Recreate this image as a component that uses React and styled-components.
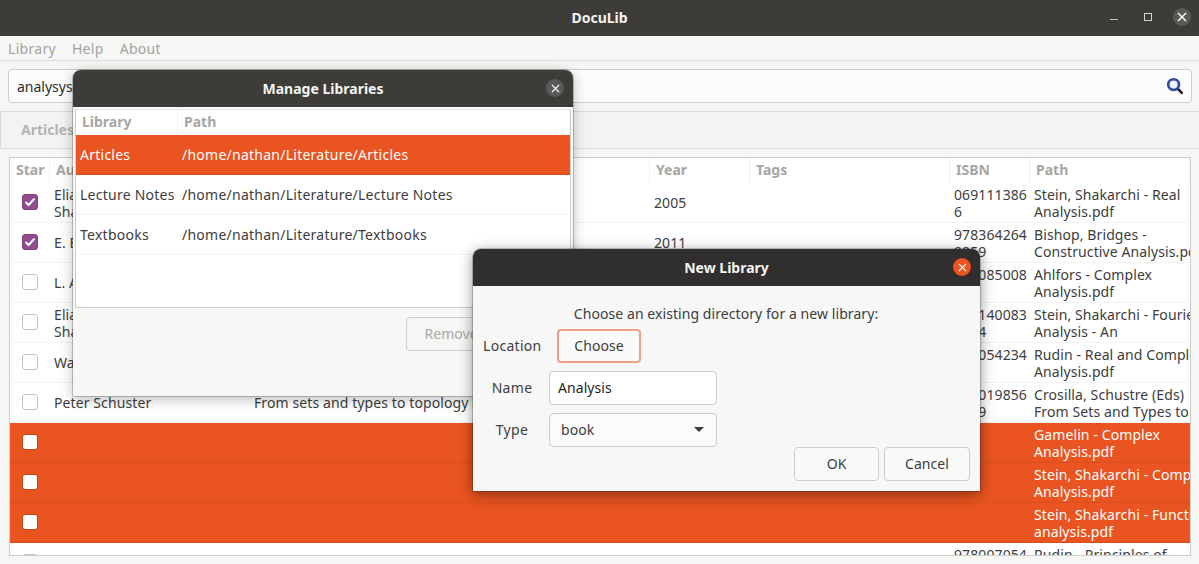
import React from "react";
import styled, { createGlobalStyle } from "styled-components";

const Global = createGlobalStyle`
  html, body { margin: 0; padding: 0; background: #f6f6f5; }
  * { box-sizing: border-box; }
`;

const Win = styled.div`
  position: relative; width: 1199px; height: 564px; overflow: hidden;
  background: #f6f6f5; color: #3d3d3d;
  font-family: "Noto Sans", sans-serif; font-size: 14px; line-height: 17px;
  display: flex; flex-direction: column;
`;
const TitleBar = styled.div`
  height: ${p => p.$h || 36}px; flex: none; background: ${p => p.$bg || "#3d3c39"};
  display: flex; align-items: center; justify-content: center; position: relative;
  color: #f4f4f2; font-weight: 700; font-size: 14px; padding-bottom: 1px;
`;
const WinButtons = styled.div`
  position: absolute; right: 8px; top: 8px; display: flex; align-items: center; gap: 16px;
`;
const WinBtn = styled.div`
  width: 18px; height: 18px; display: flex; align-items: center; justify-content: center;
  border-radius: 50%; background: ${p => p.$bg || "transparent"};
`;
const MenuBar = styled.div`
  height: 25px; flex: none; display: flex; gap: 16px; padding: 4px 8px 0;
  color: #a3a3a1; border-bottom: 1px solid #dcdcda; letter-spacing: .3px;
`;
const SearchRow = styled.div`
  height: 51px; flex: none; padding: 8px 7px 8px 8px; border-bottom: 1px solid #d9d9d7;
`;
const SearchBox = styled.div`
  height: 34px; background: #fcfcfc; border: 1px solid #cfcfcd; border-radius: 4px;
  display: flex; align-items: center; justify-content: space-between; padding: 0 7px 0 8px; color: #2d2d2d;
`;
const TabsRow = styled.div`
  height: 37px; flex: none; display: flex; align-items: center; padding: 0 0 1px 20px;
  background: #f3f3f2; border-bottom: 1px solid #d9d9d7; border-left: 1px solid #d9d9d7;
  color: #b5b5b3; font-weight: 700;
`;
const Content = styled.div`
  flex: 1; padding: 8px 8px 8px 9px; min-height: 0;
`;
const TableFrame = styled.div`
  height: 100%; background: #fff; border: 1px solid #cdcdcb; overflow: hidden;
`;
const grid = "40px 200px 400px 100px 200px 80px 160px";
const HeadRow = styled.div`
  display: grid; grid-template-columns: ${p => p.$cols}; height: ${p => p.$h}px; background: #fff;
`;
const HeadCell = styled.div`
  padding: 3px 0 0 6px; color: #a6a6a4; font-weight: 700; white-space: nowrap; overflow: hidden;
  border-right: 1px solid #f1f1f0;
`;
const Row = styled.div`
  display: grid; grid-template-columns: ${p => p.$cols}; height: 40px;
  background: ${p => (p.$sel ? "#e95420" : "#fff")}; color: ${p => (p.$sel ? "#fff" : "#3d3d3d")};
  border-bottom: 1px solid ${p => (p.$sel ? "#d94e1d" : "#f3f3f2")};
`;
const Cell = styled.div`
  padding: ${p => (p.$n === 2 ? 3 : 11)}px 0 0 4px; white-space: nowrap; overflow: hidden; height: 39px;
  letter-spacing: ${p => p.$ls || 0.1}px;
`;
const StarCell = styled.div`
  display: flex; align-items: center; justify-content: center; padding-bottom: 2px;
`;
const Check = styled.div`
  width: 16px; height: 16px; border-radius: 3px;
  background: ${p => (p.$on ? "#924d8b" : "#fff")};
  border: 1px solid ${p => (p.$on ? "#7f4279" : p.$sel ? "#b8441a" : "#c4c4c2")};
  display: flex; align-items: center; justify-content: center;
`;
const Dialog = styled.div`
  position: absolute; left: ${p => p.$x}px; top: ${p => p.$y}px; width: ${p => p.$w}px; height: ${p => p.$h}px;
  background: #f7f7f7; border-radius: 8px 8px 0 0; display: flex; flex-direction: column;
  box-shadow: 0 3px 14px rgba(0,0,0,${p => p.$shadow}); outline: 1px solid rgba(0,0,0,.2);
`;
const DlgTitle = styled(TitleBar)`
  border-radius: 8px 8px 0 0;
`;
const DlgClose = styled.div`
  position: absolute; right: 9px; top: 9px; width: 18px; height: 18px; border-radius: 50%;
  background: ${p => p.$bg}; display: flex; align-items: center; justify-content: center;
`;
const LibTableWrap = styled.div`
  margin: 2px 2px 0; height: 199px; background: #fff; border: 1px solid #cdcdcb; border-top-color: #e5e5e5;
`;
const RemoveRow = styled.div`
  display: flex; padding: 9px 0 0 333px;
`;
const Btn = styled.div`
  width: ${p => p.$w}px; height: ${p => p.$h || 34}px; border-radius: 4px; background: ${p => p.$bg || "#fafafa"};
  border: ${p => p.$bw || 1}px solid ${p => p.$bc || "#cdcdcb"}; color: ${p => p.$c || "#3d3d3d"};
  display: flex; align-items: center; justify-content: center; flex: none; padding-bottom: 2px;
`;
const DlgBody = styled.div`
  flex: 1; position: relative; padding: 19px 10px 0; display: flex; flex-direction: column; letter-spacing: .07px;
`;
const Prompt = styled.div`
  text-align: center; margin-bottom: 7px; height: 17px; margin-left: -1px;
`;
const FormRow = styled.div`
  display: flex; align-items: center; height: 34px; margin-bottom: 8px;
`;
const Label = styled.div`
  width: ${p => p.$w}px; margin-right: ${p => p.$mr}px; text-align: center; flex: none; letter-spacing: .3px; padding-bottom: 2px;
`;
const Input = styled.div`
  width: 168px; height: 34px; background: #fff; border: 1px solid #cdcdcb; border-radius: 4px;
  display: flex; align-items: center; padding: 0 8px 2px; color: #1f1f1f;
`;
const Select = styled(Input)`
  background: #fbfbfb; color: #3d3d3d; padding: 0 12px 2px 11px; justify-content: space-between;
`;
const Caret = styled.div`
  width: 0; height: 0; border-left: 5px solid transparent; border-right: 5px solid transparent; border-top: 5px solid #3d3d3d;
`;
const Actions = styled.div`
  position: absolute; right: 10px; bottom: 10px; display: flex; gap: 5px;
`;

const X = ({ s = 10, w = 1.4, c = "#fff" }) => (
  <svg width={s} height={s} viewBox="0 0 10 10"><path d="M1 1 9 9M9 1 1 9" stroke={c} strokeWidth={w} fill="none" /></svg>
);
const Tick = () => (
  <svg width="12" height="10" viewBox="0 0 12 10"><path d="M1.5 5 4.5 8 10.5 1.8" stroke="#fff" strokeWidth="2" fill="none" /></svg>
);
const Glass = () => (
  <svg width="18" height="18" viewBox="0 0 18 18">
    <path d="M10.5 10.5 15.8 15.8" stroke="#222" strokeWidth="2.6" strokeLinecap="round" />
    <circle cx="7.6" cy="7.6" r="5.4" fill="#e6eef8" stroke="#2f4a9c" strokeWidth="2.6" />
    <circle cx="7.6" cy="7.6" r="3.2" fill="#f2f5fb" />
  </svg>
);

const rows = [
  { on: 1, a: ["Elias M. Stein, Rami", "Shakarchi"], t: "Real Analysis", y: "2005", i: ["069111386", "6"], p: ["Stein, Shakarchi - Real", "Analysis.pdf"] },
  { on: 1, a: ["E. Bishop, D. Bridges"], t: "Constructive Analysis", y: "2011", i: ["978364264", "9059"], p: ["Bishop, Bridges -", "Constructive Analysis.pdf"] },
  { a: ["L. Ahlfors"], t: "Complex Analysis", i: ["007085008", "9"], p: ["Ahlfors - Complex", "Analysis.pdf"] },
  { a: ["Elias M. Stein, Rami", "Shakarchi"], t: "Fourier Analysis", i: ["978140083", "1384"], p: ["Stein, Shakarchi - Fourier", "Analysis - An"] },
  { a: ["Walter Rudin"], t: "Real and Complex Analysis", i: ["007054234", "1"], p: ["Rudin - Real and Complex", "Analysis.pdf"] },
  { a: ["Peter Schuster"], t: "From sets and types to topology and analysis", i: ["978019856", "0619"], p: ["Crosilla, Schustre (Eds)", "From Sets and Types to"] },
  { sel: 1, p: ["Gamelin - Complex", "Analysis.pdf"] },
  { sel: 1, p: ["Stein, Shakarchi - Complex", "Analysis.pdf"] },
  { sel: 1, p: ["Stein, Shakarchi - Functional", "analysis.pdf"] },
  { i: ["978007054", "2358"], p: ["Rudin - Principles of", "Mathematical Analysis.pdf"] },
];
const Lines = ({ l = [] }) => <Cell $n={l.length}>{l.map(x => <div key={x}>{x}</div>)}</Cell>;

const libCols = "102px 392px";
const libs = [
  ["Articles", "/home/nathan/Literature/Articles"],
  ["Lecture Notes", "/home/nathan/Literature/Lecture Notes"],
  ["Textbooks", "/home/nathan/Literature/Textbooks"],
];

export default function App() {
  return (
    <Win>
      <Global />
      <TitleBar>
        DocuLib
        <WinButtons>
          <WinBtn><svg width="10" height="10" viewBox="0 0 10 10"><path d="M1 7.5H9" stroke="#bdbdbb" /></svg></WinBtn>
          <WinBtn><svg width="10" height="10" viewBox="0 0 10 10"><rect x="1.5" y="1.5" width="7" height="7" fill="none" stroke="#d5d5d3" /></svg></WinBtn>
          <WinBtn $bg="#5b5a58"><X /></WinBtn>
        </WinButtons>
      </TitleBar>
      <MenuBar><span>Library</span><span>Help</span><span>About</span></MenuBar>
      <SearchRow>
        <SearchBox>analysys<Glass /></SearchBox>
      </SearchRow>
      <TabsRow>Articles</TabsRow>
      <Content>
        <TableFrame>
          <HeadRow $cols={grid} $h={25}>
            {["Star", "Authors", "Title", "Year", "Tags", "ISBN", "Path"].map(h => <HeadCell key={h}>{h}</HeadCell>)}
          </HeadRow>
          {rows.map((r, i) => (
            <Row key={i} $cols={grid} $sel={r.sel}>
              <StarCell><Check $on={r.on} $sel={r.sel}>{r.on ? <Tick /> : null}</Check></StarCell>
              <Lines l={r.a} />
              <Lines l={r.t ? [r.t] : []} />
              <Lines l={r.y ? [r.y] : []} />
              <Cell />
              <Lines l={r.i} />
              <Lines l={r.p} />
            </Row>
          ))}
        </TableFrame>
      </Content>

      <Dialog $x={73} $y={70} $w={500} $h={326} $shadow={0.28}>
        <DlgTitle $h={37}>Manage Libraries<DlgClose $bg="#5b5a58"><X s={9} /></DlgClose></DlgTitle>
        <LibTableWrap>
          <HeadRow $cols={libCols} $h={25}>
            <HeadCell>Library</HeadCell><HeadCell>Path</HeadCell>
          </HeadRow>
          {libs.map((l, i) => (
            <Row key={l[0]} $cols={libCols} $sel={i === 0}>
              <Cell $ls={0.25}>{l[0]}</Cell><Cell $ls={0.25}>{l[1]}</Cell>
            </Row>
          ))}
        </LibTableWrap>
        <RemoveRow><Btn $w={90} $c="#a9a9a7" $bg="#f6f6f5">Remove</Btn></RemoveRow>
      </Dialog>

      <Dialog $x={473} $y={249} $w={507} $h={242} $shadow={0.45}>
        <DlgTitle $h={37} $bg="#302e2e">New Library<DlgClose $bg="#e95420"><X s={9} /></DlgClose></DlgTitle>
        <DlgBody>
          <Prompt>Choose an existing directory for a new library:</Prompt>
          <FormRow><Label $w={58} $mr={16}>Location</Label><Btn $w={84} $bc="#ef9f85" $bw={2}>Choose</Btn></FormRow>
          <FormRow><Label $w={58} $mr={8}>Name</Label><Input>Analysis</Input></FormRow>
          <FormRow><Label $w={58} $mr={8}>Type</Label><Select>book<Caret /></Select></FormRow>
          <Actions><Btn $w={85}>OK</Btn><Btn $w={86}>Cancel</Btn></Actions>
        </DlgBody>
      </Dialog>
    </Win>
  );
}
